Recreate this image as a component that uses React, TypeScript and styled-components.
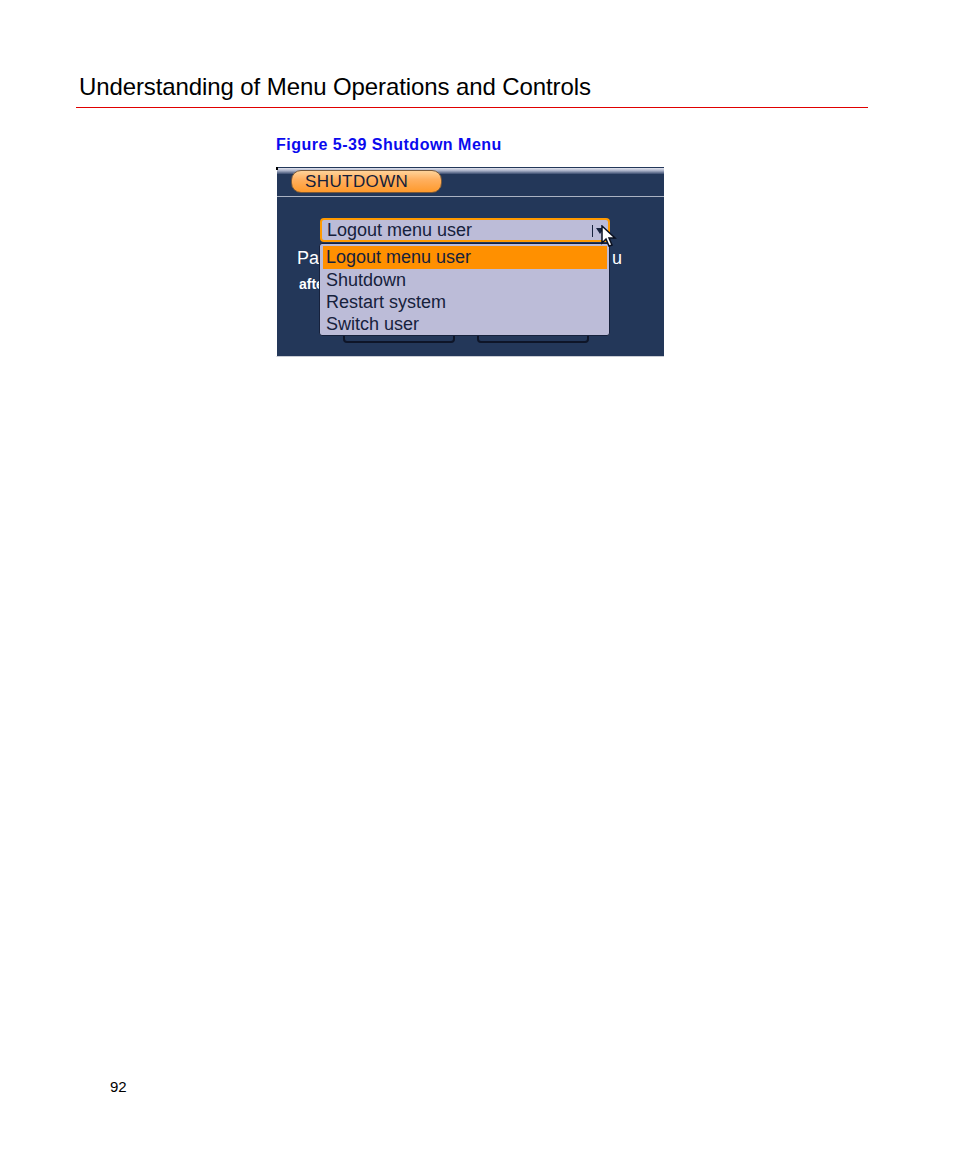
import styled, { createGlobalStyle } from 'styled-components'

const GlobalStyle = createGlobalStyle`
  html, body {
    margin: 0;
    padding: 0;
    background: #ffffff;
  }
  body {
    font-family: "Liberation Sans", Arial, sans-serif;
    color: #000;
  }
`

const Page = styled.div`
  width: 954px;
  min-height: 1157px;
  display: flex;
  flex-direction: column;
  box-sizing: border-box;
`

const Header = styled.header`
  margin: 0 86px 0 76px;
  padding: 73px 0 6px 3px;
  border-bottom: 1px solid #e00000;
`

const Title = styled.h1`
  margin: 0;
  font-size: 24px;
  line-height: 28px;
  font-weight: 400;
  letter-spacing: -0.1px;
  color: #000;
`

const Figure = styled.figure`
  margin: 27px 0 0 276px;
  display: flex;
  flex-direction: column;
  align-items: flex-start;
`

const Caption = styled.figcaption`
  font-size: 16px;
  line-height: 19px;
  font-weight: 700;
  letter-spacing: 0.5px;
  color: #0a0aee;
`

const Screen = styled.div`
  margin-top: 13px;
  position: relative;
  width: 388px;
  display: flex;
  flex-direction: column;
  border-left: 1px solid #ffffff;
  box-sizing: border-box;
  background: #233759;
  border-bottom: 1px solid #c9ccd4;
  &::before {
    content: '';
    position: absolute;
    left: -1px;
    top: 0;
    width: 2px;
    height: 3px;
    background: #000;
  }
`

const TopStrip = styled.div`
  height: 6px;
  margin-top: 1px;
  background: linear-gradient(#e2e4ee, #aab2c8 45%, #3a4c70);
`

const TabBar = styled.div`
  display: flex;
  padding: 0 0 3px 14px;
  margin-top: -4px;
  border-bottom: 1px solid #aab2c2;
`

const Tab = styled.div`
  width: 151px;
  height: 23px;
  box-sizing: border-box;
  border: 1px solid #7a5a3a;
  border-radius: 10px;
  background: linear-gradient(#ffd39a, #ffb060 40%, #ff9a2c);
  color: #14203a;
  font-size: 17px;
  line-height: 22px;
  padding-left: 13px;
  letter-spacing: 0.4px;
`

const Body = styled.div`
  display: flex;
  flex-direction: column;
  padding: 21px 0 13px 0;
`

const SelectWrap = styled.div`
  position: relative;
  margin-left: 43px;
  width: 290px;
  z-index: 2;
`

const Select = styled.div`
  height: 24px;
  box-sizing: border-box;
  border: 2px solid #ff9a00;
  border-radius: 4px;
  background: #bcbcd8;
  display: flex;
  align-items: center;
  padding: 0 4px 0 5px;
  color: #16213c;
  font-size: 18px;
`

const SelectText = styled.span`
  flex: 1;
  line-height: 22px;
`

const Arrow = styled.span`
  display: flex;
  align-items: center;
  gap: 3px;
  padding-top: 1px;
`

const Bar = styled.span`
  width: 1.5px;
  height: 12px;
  background: #16213c;
`

const Caret = styled.span`
  width: 0;
  height: 0;
  border-left: 4px solid transparent;
  border-right: 4px solid transparent;
  border-top: 6px solid #16213c;
`

const Cursor = styled.svg`
  position: absolute;
  left: 281px;
  top: 7px;
  width: 17px;
  height: 24px;
`

const List = styled.ul`
  position: absolute;
  left: -1px;
  top: 25px;
  width: 291px;
  margin: 0;
  padding: 2px 2px 0 3px;
  box-sizing: border-box;
  list-style: none;
  background: #bcbcd8;
  border: 1px solid #16213c;
  border-radius: 3px;
`

const Item = styled.li<{ $active?: boolean }>`
  height: ${p => (p.$active ? 23 : 22)}px;
  line-height: ${p => (p.$active ? 23 : 22)}px;
  padding-left: 3px;
  font-size: 18px;
  color: #16213c;
  background: ${p => (p.$active ? '#ff9000' : 'transparent')};
`

const HintLine = styled.div<{ $small?: boolean }>`
  display: flex;
  justify-content: space-between;
  width: 325px;
  margin-left: ${p => (p.$small ? 22 : 20)}px;
  margin-top: ${p => (p.$small ? 6 : 6)}px;
  height: 20px;
  line-height: 20px;
  color: #ffffff;
  font-size: ${p => (p.$small ? 14 : 18)}px;
  font-weight: ${p => (p.$small ? 700 : 400)};
`

const ButtonRow = styled.div`
  display: flex;
  gap: 22px;
  margin: 24px 0 0 66px;
`

const Button = styled.div`
  width: 112px;
  height: 25px;
  box-sizing: border-box;
  border: 2px solid #0e1528;
  border-radius: 4px;
  background: #233759;
`

const Footer = styled.footer`
  margin-top: auto;
  padding: 0 0 61px 110px;
  font-size: 15px;
  line-height: 18px;
`

const items = ['Logout menu user', 'Shutdown', 'Restart system', 'Switch user']

export default function App() {
  return (
    <Page>
      <GlobalStyle />
      <Header>
        <Title>Understanding of Menu Operations and Controls</Title>
      </Header>
      <Figure>
        <Caption>Figure 5-39 Shutdown Menu</Caption>
        <Screen>
          <TopStrip />
          <TabBar>
            <Tab>SHUTDOWN</Tab>
          </TabBar>
          <Body>
            <SelectWrap>
              <Select>
                <SelectText>Logout menu user</SelectText>
                <Arrow>
                  <Bar />
                  <Caret />
                </Arrow>
              </Select>
              <List>
                {items.map((it, i) => (
                  <Item key={it} $active={i === 0}>{it}</Item>
                ))}
              </List>
              <Cursor viewBox="0 0 17 24">
                <path
                  d="M1 1 L1 18 L5 14 L8 21 L11 20 L8 13 L14 13 Z"
                  fill="#ffffff"
                  stroke="#0a1020"
                  strokeWidth="1.5"
                  strokeLinejoin="miter"
                />
              </Cursor>
            </SelectWrap>
            <HintLine>
              <span>Pa</span>
              <span>u</span>
            </HintLine>
            <HintLine $small>
              <span>afte</span>
            </HintLine>
            <ButtonRow>
              <Button />
              <Button />
            </ButtonRow>
          </Body>
        </Screen>
      </Figure>
      <Footer>92</Footer>
    </Page>
  )
}
